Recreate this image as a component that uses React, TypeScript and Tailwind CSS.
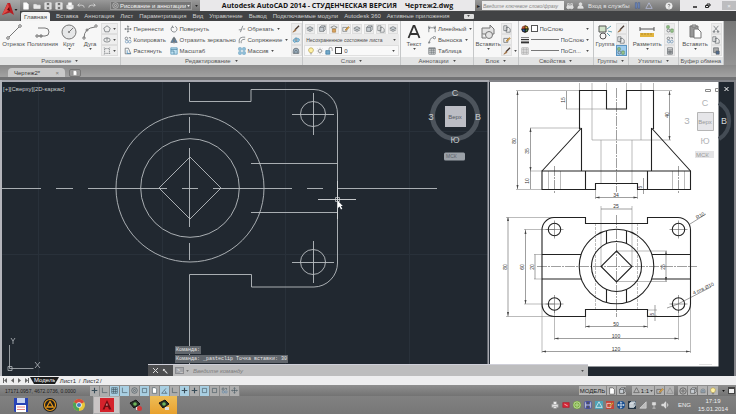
import type { ReactNode } from 'react'

const glyphs: Record<string, ReactNode> = {
    move: <path d="M5 1v8M1 5h8M3.8 2.2 5 1l1.2 1.2M3.8 7.8 5 9l1.2-1.2M2.2 3.8 1 5l1.2 1.2M7.8 3.8 9 5 7.8 6.2" />,
    rotate: <path d="M6.5 1.7A3.7 3.7 0 1 1 3 2M3 .8V3h2" />,
    trim: <path d="M1 6h3M6 5h3M3 9l3-8" />,
    copy: <><circle cx="3" cy="3" r="1.6" /><circle cx="3.4" cy="7" r="1.7" stroke="#5b87ad" /><circle cx="7.2" cy="7" r="1.7" stroke="#5b87ad" /><path d="M6 2h2v2" /></>,
    mirror: <><path d="M4.3 2v6H1zM5.7 2v6H9z" fill="#5f8db4" /><path d="M5 1v8.5" /></>,
    fillet: <path d="M1.5 9V5Q2 1.5 6 1.5h3M4 9V6.5Q4.5 4 9 4" />,
    stretch: <><path d="M1.5 1.5h4l3 7h-7z" /><path d="M4 4v4h4.5" stroke="#2e7fb8" /></>,
    scale: <><path d="M1 1h8v8H1z" fill="#bfe0f0" stroke="#4187ae" /><path d="M1 5h4v4M1 3h8" stroke="#34708f" /></>,
    array: <path d="M1 1h3v3H1zM6 1h3v3H6zM1 6h3v3H1zM6 6h3v3H6z" fill="#b6dcef" stroke="#3f86ad" />,
    brush: <><path d="m8.8 1-5 5" stroke="#493a32" strokeWidth="1.6" /><path d="M4 5.5 1 9l4-2z" fill="#a77443" stroke="#976737" /></>,
    cloud: <><path d="M2 7Q0 5 3 4q1-3 4-1 3 0 2 3-1 2-4 1-2 2-3 0z" fill="#9bd0ec" stroke="#3380aa" /><circle cx="5" cy="5" r="1.3" fill="#fff" /></>,
    offset: <path d="M1.5 8V5a3.5 3.5 0 0 1 7 0v3zM3.5 8V5.5a1.5 1.5 0 0 1 3 0V8" fill="#9db4c6" />,
    layers: <path d="m1 4 4-2 4 2-4 2zM1 6l4 2 4-2" fill="#c8ced3" />,
    layersOn: <><path d="m1 3 4-2 4 2-4 2z" fill="#e7e7e4" /><path d="M3 5h4v4H3z" fill="#d9a45d" stroke="#a87838" /></>,
    layerBox: <path d="M2 3h5v5H2zM2 3l2-2h5L7 3M9 1v5L7 8" fill="#c7cdd3" />,
    rect: <path d="M2 2h6v6H2zM1 1h1M8 8h1M1 9h1M8 1h1" strokeDasharray="1.5 .7" />,
    polygon: <path d="m5 1 4 3-1.5 4.5h-5L1 4z" />,
    ellipse: <><ellipse cx="5" cy="5" rx="4" ry="2.6" /><path d="M5 2v4" /></>,
    dim: <path d="M1 1v8M9 1v8M1 3.5h8M2.5 2 1 3.5 2.5 5M7.5 2 9 3.5 7.5 5" />,
    leader: <><path d="M1 9 3 4q1-2 3-2" /><circle cx="8" cy="2" r="1.5" /><path d="m1 7 0 2 2-1" /></>,
    table: <path d="M1 1h8v8H1zM1 2h8M1 4h8M1 6.5h8M4 2v7M6.5 2v7" />,
    bulb: <><path d="M3.5 7Q1.8 5 2 3.5q.5-2.5 3-2.5t3 2.5Q8.2 5 6.5 7z" fill="#fff2a6" stroke="#b19b45" /><path d="M3.7 8.5h2.6" /></>,
    sun: <><circle cx="5" cy="5" r="2" /><path d="M5 1v1M5 8v1M1 5h1M8 5h1M2.2 2.2l.7.7M7.1 7.1l.7.7M7.8 2.2l-.7.7M2.9 7.1l-.7.7" /></>,
    lock: <><path d="M1 4.5h5V9H1z" fill="#73a9ca" stroke="#2e6f99" /><path d="M5 4V2.5a1.8 1.8 0 0 1 4 0V5" /></>,
    edit: <><path d="M1 3h5v5H1z" /><path d="m4 6 4-4 1 1-4 4z" fill="#e0aa50" stroke="#a77121" /></>,
    group: <><path d="M1 1h3v3H1zM6 5h3v4H6z" fill="#a8d299" stroke="#558451" /><circle cx="3" cy="7" r="1.8" /></>,
    calc: <path d="M2 1h6v8H2zM2 3.5h6M4 4v5M6 4v5M2 5.5h6M2 7.2h6" />,
    cut: <path d="m2 1 5 6M8 1 3 7M1.5 7.5h2v1.5h-2zM6.5 7.5h2v1.5h-2z" />,
    pages: <path d="M1 1h4v6H1zM4 3h3l2 2v4H4z" />,
    clip: <><path d="M2 1h6v6H2z" fill="#ababab" /><path d="M5 5h4v4H5z" fill="#506b92" /></>,
    flag: <><path d="M1 2h8v6H1z" fill="#d62737" stroke="#b01b2b" /><path d="m3 4 4 2" stroke="#fff" /></>,
    wheel: <><circle cx="5" cy="5" r="4" fill="#cf543c" stroke="#7d5a37" /><path d="M5 5V1a4 4 0 0 1 4 4z" fill="#e6b83a" /><path d="M5 5h4a4 4 0 0 1-4 4z" fill="#538552" /><path d="M5 5v4a4 4 0 0 1-4-4z" fill="#3a62a0" /></>,
    weight: <><path d="M0 2h10" strokeWidth=".8" /><path d="M0 4.5h10" strokeWidth="1.5" /><path d="M0 8h10" strokeWidth="2.4" /></>,
    ltype: <path d="M1 1h8v8H1zM1 3.5h8M1 6.5h8M3.5 1v8M6.5 1v8" stroke="#999" />,
    page: <path d="M2 1h4l2 2v6H2z" fill="#fff" />,
    folder: <path d="M1 3h3l1 1h4v4H1z" fill="#e9e9e9" />,
    save: <><path d="M1 1h8v8H1z" fill="#dadada" /><path d="M3 1h4v3H3zM3 6h4v3H3z" fill="#555" /></>,
    print: <><path d="M1 4h8v4H1z" fill="#e1e1e1" /><path d="M3 1h4v3H3zM3 7h4v2H3z" fill="#fff" /></>,
    undo: <path d="M3 2 1 4l2 2M1 4h5q3 0 3 3" />,
    redo: <path d="m7 2 2 2-2 2M9 4H4Q1 4 1 7" />,
    gear: <><circle cx="5" cy="5" r="4" /><circle cx="5" cy="5" r="1.5" /></>,
    corner: <path d="M2 1v7h7" />,
    grid: <path d="M1 1h8v8H1zM1 3.6h8M1 6.3h8M3.6 1v8M6.3 1v8" />,
    polar: <path d="M1 9 7 2M1 9h8M5 5q2 1 2 4" />,
    osnap: <path d="M2 2h6v6H2z" />,
    plus: <path d="M5 1v8M1 5h8" strokeWidth="1.6" />,
    tri: <path d="m5 1 4 7H1z" />,
    search: <><circle cx="3" cy="6.5" r="2" fill="#ddd" /><circle cx="7" cy="6.5" r="2" fill="#ddd" /><path d="M2 5V2h2v3M6 5V2h2v3" /></>,
    person: <><circle cx="5" cy="3" r="2" fill="#ddd" /><path d="M1 9q0-4 4-4t4 4z" fill="#ddd" /></>,
    swap: <path d="M2 1h2v8H2zM6 1h2v8H6z" fill="#8aa6d8" />,
    plug: <path d="M3 2h4v3H3zM5 5v4M3 9h4" fill="#ddd" />,
    help: <><circle cx="5" cy="5" r="4" fill="#eee" /><path d="M3.7 4Q4 2.5 5.2 2.8t.8 1.5L5 5.5V6M5 7v1" stroke="#444" /></>,
    wrench: <path d="m2 2 6 6M1.5 4Q4 4.5 4 1.5M8 9l1-1" strokeWidth="1.8" />,
    signal: <path d="M1 9h8V1z" fill="#bbb" />,
    speaker: <path d="M1 4h2l3-3v8L3 6H1zM8 3q1.5 2 0 4" fill="#ddd" />,
}

const Glyph = ({ name, className = 'size-2.5 text-[#5d6266]' }: { name: string; className?: string }) => (
    <svg viewBox="0 0 10 10" className={`shrink-0 ${className}`} fill="none" stroke="currentColor" strokeWidth=".8" aria-hidden="true">
        {glyphs[name]}
    </svg>
)

const Caret = ({ className = 'text-[#4c4c4c]' }: { className?: string }) => (
    <svg viewBox="0 0 4 3" className={`w-[3px] h-[2px] shrink-0 ${className}`} aria-hidden="true">
        <path d="M0 0h4L2 3z" fill="currentColor" />
    </svg>
)

const Panel = ({ title, className, caret = true, children }: { title: string; className: string; caret?: boolean; children: ReactNode }) => (
    <section className={`min-w-0 flex flex-col border-r border-[#c5c7c8] bg-[#f7f7f7] ${className}`}>
        <div className="h-9 flex pt-[2px] px-px overflow-hidden">{children}</div>
        <button className="h-2 w-full flex items-center justify-center gap-1 bg-[#e2e3e3] text-[#555] whitespace-nowrap">
            {title}
            {caret && <Caret />}
        </button>
    </section>
)

const BigTool = ({ label, className, caret, children }: { label: string; className: string; caret?: boolean; children: ReactNode }) => (
    <button className={`flex flex-col items-center shrink-0 text-[#505050] ${className}`}>
        <span className="h-[17px] flex items-center justify-center">{children}</span>
        <span className="h-2 leading-[8px] whitespace-nowrap">{label}</span>
        {caret && <Caret />}
    </button>
)

const ToolColumn = ({ tools, className }: { tools: { icon: string; label: string; caret?: boolean }[]; className: string }) => (
    <div className={`flex flex-col shrink-0 ${className}`}>
        {tools.map((t) => (
            <button key={t.label} className="h-[11px] flex items-center gap-[2px] whitespace-nowrap text-[#505050]">
                <Glyph name={t.icon} className="size-2 text-[#555b60]" />
                {t.label}
                {t.caret && <Caret className="text-[#4c4c4c] ml-px" />}
            </button>
        ))}
    </div>
)

const IconColumn = ({ icons, className, active = -1 }: { icons: [string, string][]; className: string; active?: number }) => (
    <div className={`flex flex-col shrink-0 ${className}`}>
        {icons.map(([icon, label], i) => (
            <button
                key={label}
                aria-label={label}
                className={`h-[11px] w-full flex items-center justify-center border ${i === active ? 'bg-[#9ecbed] border-[#5a95c2]' : 'bg-[#ededed] border-[#e0e0e0]'}`}
            >
                <Glyph name={icon} className="size-2 text-[#555b60]" />
            </button>
        ))}
    </div>
)

const Choice = ({ label, value, className = '' }: { label: string; value: string; className?: string }) => (
    <span className="flex-1 min-w-0 flex items-center pr-[3px]">
        <select aria-label={label} className={`appearance-none flex-1 min-w-0 bg-transparent text-[#4d4d4d] ${className}`}>
            <option>{value}</option>
        </select>
        <Caret />
    </span>
)

const quickIcons: [string, string][] = [
    ['page', 'Создать'],
    ['folder', 'Открыть'],
    ['save', 'Сохранить'],
    ['save', 'Сохранить как'],
    ['print', 'Печать'],
    ['undo', 'Отменить'],
    ['redo', 'Повторить'],
]

const TitleBar = () => (
    <header className="h-[11px] flex items-center pl-[22px] bg-linear-to-b from-[#999] to-[#747474]">
        <div className="w-[88px] shrink-0 flex items-center gap-[3px]">
            {quickIcons.map(([icon, label]) => (
                <button key={label} aria-label={label}>
                    <Glyph name={icon} className="size-2 text-[#eee]" />
                </button>
            ))}
        </div>
        <div className="w-[82px] h-[9px] shrink-0 flex items-center gap-px pl-px bg-[#777] border border-[#999] text-[#eee]">
            <Glyph name="gear" className="size-[7px] text-[#ddd]" />
            <select aria-label="Рабочее пространство" className="appearance-none flex-1 min-w-0 text-[#f2f2f2]">
                <option>Рисование и аннотации</option>
            </select>
            <Caret className="text-[#eee] mr-px" />
        </div>
        <button aria-label="Настройка панели" className="w-2 flex justify-center shrink-0"><Caret className="text-[#222]" /></button>
        <h1 className="h-[11px] flex-1 flex items-center justify-center bg-[#e9e8ea] text-[#161616] font-bold text-[7px] leading-[11px] whitespace-nowrap font-['Open_Sans','Noto_Sans',sans-serif]">
            Autodesk AutoCAD 2014 - СТУДЕНЧЕСКАЯ ВЕРСИЯ <span className="ml-2">Чертеж2.dwg</span>
        </h1>
        <button aria-label="Свернуть поиск" className="w-[7px] shrink-0 text-[#222]">▸</button>
        <input
            aria-label="Поиск"
            placeholder="Введите ключевое слово/фразу"
            className="w-[82px] h-[9px] shrink-0 bg-[#ececec] italic pl-px text-[5px] placeholder:text-[#888]"
        />
        <div className="w-[116px] shrink-0 flex items-center pl-[2px] text-[#e3e3e3] whitespace-nowrap">
            <button aria-label="Найти"><Glyph name="search" className="size-2 text-[#eee]" /></button>
            <button className="flex items-center gap-1 ml-[3px]">
                <Glyph name="person" className="size-[7px] text-[#eee]" />
                Вход в службы
            </button>
            <button aria-label="Exchange" className="ml-1"><Glyph name="swap" className="size-[7px] text-[#35508c]" /></button>
            <button aria-label="Autodesk 360" className="ml-1"><Glyph name="tri" className="size-2 text-[#c2c9ef]" /></button>
            <button aria-label="Справка" className="ml-3"><Glyph name="help" className="size-2 text-[#eee]" /></button>
        </div>
        <div className="w-[56px] h-[11px] shrink-0 flex items-center justify-end bg-[#e9e8ea] text-[#222]">
            <button aria-label="Свернуть" className="mr-[7px]"><svg viewBox="0 0 5 5" className="size-[5px]"><path d="M0 4h4" stroke="#222" strokeWidth="1.5" /></svg></button>
            <button aria-label="Восстановить" className="mr-[11px]"><svg viewBox="0 0 6 6" className="size-[6px]"><path d="M.5 2.5h3v2h-3zM2 2V1h3v2H4" stroke="#222" fill="none" /></svg></button>
            <button aria-label="Закрыть" className="w-[14px] h-[9px] bg-[#bdbdbf] text-[#f3f3f3]">×</button>
        </div>
    </header>
)

const tabs = ['Вставка', 'Аннотация', 'Лист', 'Параметризация', 'Вид', 'Управление', 'Вывод', 'Подключаемые модули', 'Autodesk 360', 'Активные приложения']

const RibbonTabs = () => (
    <nav className="h-[10px] flex items-center gap-[6px] pl-[21px] bg-[#414244] text-[#d0d0d0] whitespace-nowrap overflow-hidden">
        <button className="h-[9px] w-[29px] self-end bg-[#f4f4f4] text-[#444] rounded-t-xs">Главная</button>
        {tabs.map((t) => <button key={t}>{t}</button>)}
        <button aria-label="Вид ленты" className="ml-2 w-2.5 h-[5px] bg-[#ddd] rounded-[1px] flex items-center justify-center"><Caret /></button>
    </nav>
)

const Ribbon = () => (
    <div className="flex bg-linear-to-b from-[#777] to-[#949494] pr-3">
        <Panel title="Рисование" className="flex-[121]">
            <BigTool label="Отрезок" className="w-[25px]">
                <svg viewBox="0 0 16 16" className="size-4" fill="none" stroke="#777"><path d="M3 13 13 3" /><circle cx="2" cy="14" r="1.3" /><circle cx="14" cy="2" r="1.3" /></svg>
            </BigTool>
            <BigTool label="Полилиния" className="w-[33px]">
                <svg viewBox="0 0 16 16" className="size-4" fill="none" stroke="#777"><path d="M3 4h7a4 4 0 0 1 0 8H3" /><path d="M1 11h2v2H1zM5 11h2v2H5z" /></svg>
            </BigTool>
            <BigTool label="Круг" caret className="w-5">
                <svg viewBox="0 0 16 16" className="size-4" fill="#e6e7e8" stroke="#777"><circle cx="8" cy="8" r="7" /><path d="m8 8 4-4" /><circle cx="8" cy="8" r=".7" /></svg>
            </BigTool>
            <BigTool label="Дуга" caret className="w-[22px]">
                <svg viewBox="0 0 16 16" className="size-4" fill="none" stroke="#777"><path d="M2 14Q2 4 13 3" /><circle cx="2" cy="14" r="1.2" /><circle cx="14" cy="2" r="1.2" /><circle cx="5" cy="6" r="1" /></svg>
            </BigTool>
            <div className="flex flex-col">
                {[['polygon', 'Многоугольник'], ['ellipse', 'Эллипс'], ['rect', 'Штриховка']].map(([icon, label]) => (
                    <button key={icon} aria-label={label} className="h-[11px] w-[17px] flex items-center justify-between px-px bg-[#eee] border border-[#dedede]">
                        <Glyph name={icon} className="size-2 text-[#555b60]" />
                        <Caret />
                    </button>
                ))}
            </div>
        </Panel>
        <Panel title="Редактирование" className="flex-[184]">
            <ToolColumn className="w-[46px] pl-[2px]" tools={[{ icon: 'move', label: 'Перенести' }, { icon: 'copy', label: 'Копировать' }, { icon: 'stretch', label: 'Растянуть' }]} />
            <ToolColumn className="w-[68px] pl-[2px]" tools={[{ icon: 'rotate', label: 'Повернуть' }, { icon: 'mirror', label: 'Отразить зеркально' }, { icon: 'scale', label: 'Масштаб' }]} />
            <ToolColumn className="w-[55px] pl-[2px]" tools={[{ icon: 'trim', label: 'Обрезать', caret: true }, { icon: 'fillet', label: 'Сопряжение', caret: true }, { icon: 'array', label: 'Массив', caret: true }]} />
            <IconColumn className="w-[11px]" icons={[['brush', 'Стереть'], ['cloud', 'Расчленить'], ['offset', 'Подобие']]} />
        </Panel>
        <Panel title="Слои" className="flex-[98]">
            <div className="flex-1 min-w-0 flex flex-col">
                <div className="h-[11px] flex items-center justify-between px-px">
                    {['layers', 'layerBox', 'layersOn', 'edit', 'layers', 'layerBox', 'pages', 'layers'].map((icon, i) => (
                        <button key={i} aria-label={`Слой ${i + 1}`} className="size-[10px] bg-[#ececec] border border-[#dedede] flex items-center justify-center">
                            <Glyph name={icon} className="size-2 text-[#666c70]" />
                        </button>
                    ))}
                </div>
                <div className="h-[11px] flex items-center pl-[2px] bg-[#ebebeb]"><Choice label="Состояние слоев" value="Несохраненное состояние листа" className="text-[5px]" /></div>
                <div className="h-[11px] flex items-center gap-px pl-[2px] bg-[#f9f9f9] border border-[#e0e0e0]">
                    <Glyph name="bulb" className="size-2 text-[#777]" />
                    <Glyph name="sun" className="size-2 text-[#777]" />
                    <Glyph name="lock" className="size-2 text-[#777]" />
                    <span className="size-[7px] border border-[#444] bg-white mx-px" />
                    <Choice label="Слой" value="0" />
                </div>
            </div>
        </Panel>
        <Panel title="Аннотации" className="flex-[73]">
            <BigTool label="Текст" caret className="w-6">
                <svg viewBox="0 0 14 14" className="size-3.5" stroke="#333" fill="none"><path d="M1.5 13 6.5 1h1l5 12M3.5 9h7" strokeWidth="1.8" /></svg>
            </BigTool>
            <ToolColumn className="pl-[2px]" tools={[{ icon: 'dim', label: 'Линейный', caret: true }, { icon: 'leader', label: 'Выноска', caret: true }, { icon: 'table', label: 'Таблица' }]} />
        </Panel>
        <Panel title="Блок" className="flex-[44]">
            <BigTool label="Вставить" caret className="w-[26px]">
                <svg viewBox="0 0 16 16" className="size-4" fill="#e3e3e3" stroke="#777"><path d="M2 4h8V1l4 4v5H2z" /><circle cx="9" cy="11" r="3.5" /><path d="M2 10v4h4" /></svg>
            </BigTool>
            <IconColumn className="w-[11px]" icons={[['pages', 'Создать блок'], ['edit', 'Редактировать'], ['brush', 'Атрибуты']]} />
            <span className="self-end pb-[5px] pl-[2px]"><Caret /></span>
        </Panel>
        <Panel title="Свойства" className="flex-[75]">
            <div className="flex-1 min-w-0 flex flex-col">
                <div className="h-[11px] flex items-center gap-[2px] pl-px">
                    <Glyph name="wheel" className="size-2" />
                    <span className="size-[7px] bg-white border border-[#555] shrink-0" />
                    <Choice label="Цвет" value="ПоСлою" />
                </div>
                <div className="h-[11px] flex items-center gap-[2px] pl-px">
                    <Glyph name="weight" className="size-2 text-[#333]" />
                    <span className="w-[28px] h-px bg-[#777] shrink-0" />
                    <Choice label="Вес линий" value="ПоСлою" />
                </div>
                <div className="h-[11px] flex items-center gap-[2px] pl-px">
                    <Glyph name="ltype" className="size-2" />
                    <span className="w-[28px] h-px bg-[#777] shrink-0" />
                    <Choice label="Тип линий" value="ПоСл..." />
                </div>
            </div>
        </Panel>
        <Panel title="Группы" className="flex-[35]">
            <BigTool label="Группа" className="w-[21px]">
                <svg viewBox="0 0 16 16" className="size-4" fill="none" stroke="#555"><path d="M2 2h7v6H2z" fill="#d2e4ca" /><circle cx="6" cy="12" r="3" /><path d="m10 5 4-3M11 7l4 1M10 9l3 3" stroke="#5e9faf" /></svg>
            </BigTool>
            <IconColumn active={2} className="w-[11px]" icons={[['brush', 'Разгруппировать'], ['pages', 'Редактировать группу'], ['group', 'Выбор группы']]} />
        </Panel>
        <Panel title="Утилиты" className="flex-[49]">
            <BigTool label="Разметить" caret className="w-[34px]">
                <svg viewBox="0 0 16 16" className="size-4"><path d="M1 5h14M1 3v4M15 3v4" stroke="#555" /><path d="M1 9h14v4H1z" fill="#e2b53f" /><path d="M3 9v2M6 9v2M9 9v2M12 9v2" stroke="#936e22" strokeWidth=".6" /></svg>
            </BigTool>
            <IconColumn className="w-[11px]" icons={[['group', 'Выбрать все'], ['copy', 'Быстрый выбор'], ['calc', 'Калькулятор']]} />
        </Panel>
        <Panel title="Буфер обмена" caret={false} className="flex-[45]">
            <BigTool label="Вставить" caret className="w-[31px]">
                <svg viewBox="0 0 16 16" className="size-4" stroke="#777"><path d="M3 2h8v11H3z" fill="#999" /><path d="M5 1h4v2H5z" fill="#ccc" /><path d="M7 5h4l3 3v6H7z" fill="#fff" /></svg>
            </BigTool>
            <IconColumn className="w-[11px]" icons={[['cut', 'Вырезать'], ['pages', 'Копировать в буфер'], ['clip', 'Специальная вставка']]} />
        </Panel>
    </div>
)

const DocTabs = () => (
    <div className="h-[15px] flex items-end bg-linear-to-b from-[#8a8a8a] to-[#a2a2a2] border-b-[3px] border-[#717274] pl-2">
        <button className="h-[9px] w-[57px] flex items-center justify-between px-[6px] bg-[#c9c9c9] rounded-t-sm text-[#333] whitespace-nowrap">
            Чертеж2* <span className="text-[#777]">×</span>
        </button>
        <button aria-label="Новый чертеж" className="w-3 h-2 ml-1 bg-[#999] border border-[#777] rounded-xs flex items-center justify-center">
            <Glyph name="page" className="size-[6px] text-[#777]" />
        </button>
    </div>
)

const ModelView = () => (
    <svg viewBox="0 80 489 296" className="block w-full h-auto bg-[#212830]" fill="none" role="img" aria-label="Вид модели">
        <path d="M38.5 82v294M162.5 82v294M285.5 82v294M409.5 82v294M0 131.5h489M0 254.5h489" stroke="#29313a" />
        <path d="M0 81h488.5v295" stroke="#a8a9b0" strokeWidth="2" />
        <path d="M1 80v296" stroke="#b4b5bb" strokeWidth="2" />
        <g stroke="#b9bdc1" strokeWidth=".9">
            <circle cx="190" cy="188" r="74" />
            <circle cx="190" cy="188" r="49.3" />
            <path d="m190 157 31 31-31 31-31-31z" />
            <path d="M189.5 83v18.5h61.5v-12h63A24 24 0 0 1 337.5 114v149A24 24 0 0 1 314 287h-62.5v-12.5h-62V376" />
            <path d="M251 163.5h86.5M251 212.5h86.5" />
            <circle cx="313" cy="114" r="12.5" />
            <circle cx="313" cy="262" r="12.5" />
            <path d="M292 114.5h42M313.5 93v42M292 262.5h42M313.5 241v42" />
            <path d="M2 188.5h39M56 188.5h17M88 188.5h79M182 188.5h16M213 188.5h79M307 188.5h16M337 188.5h100" />
            <path d="M189.5 117v16M189.5 148v79M189.5 243v17" />
        </g>
        <path d="M318 199.5h38M337.5 181v38" stroke="#d6d8da" strokeWidth=".9" />
        <path d="M335.5 197.5h4v4h-4z" stroke="#d6d8da" strokeWidth=".7" />
        <path d="m338 201 0 7 1.5-1.5 1.5 3 1.3-.7-1.5-2.8h2z" fill="#fff" />
        <path d="M9.5 345v23.5h24M8 366.5h4v4H8zM11 338l2 3 2-3M13 341v3M35 362l5 6M40 362l-5 6" stroke="#b4b8bc" strokeWidth=".8" />
        <text x="3" y="91" className="text-[6px] fill-[#c5c8ca]">[+][Сверху][2D-каркас]</text>
        <circle cx="455" cy="116" r="22.5" stroke="#4d545c" strokeWidth="5" />
        <path d="M445 106h21v21h-21z" fill="#bcbdc4" />
        <g className="text-[9px] fill-[#c5c8cb]" textAnchor="middle">
            <text x="455" y="96">С</text>
            <text x="431" y="120">З</text>
            <text x="478" y="120">В</text>
            <text x="455" y="143">Ю</text>
            <text x="455" y="119" className="text-[6px] fill-[#55575e]">Верх</text>
        </g>
        <rect x="444" y="152.5" width="21" height="8" rx="1.5" fill="#9ba1a8" />
        <text x="446" y="158" className="text-[5px] fill-[#5d646c]">МСК</text>
    </svg>
)

const holes = [[554.5, 229.5], [678.5, 229.5], [554.5, 304], [678.5, 304]]

// [x, y, text, rotation]
const dimensions: [number, number, string, number][] = [
    [516, 141, '80', -90],
    [529, 151, '35', -90],
    [529, 181, '10', -90],
    [565, 100, '15', -90],
    [669, 115, '40', -90],
    [642, 187, '5', -90],
    [616, 197, '34', 0],
    [616, 208, '25', 0],
    [507, 267, '80', -90],
    [524, 267, '60', -90],
    [534, 267, '20', -90],
    [665, 267, '25', -90],
    [654, 314, '5', -90],
    [616, 326, '50', 0],
    [616, 338, '100', 0],
    [616, 351, '120', 0],
    [701, 217, 'R10', -28],
    [704, 290, '4 отв.Ø10', -25],
]

const SheetView = () => (
    <svg viewBox="489 80 247 296" className="block w-full h-auto bg-[#212830]" fill="none" role="img" aria-label="Вид листа">
        <path d="M490 82h228.5v284.5H490z" fill="#fff" />
        <path d="M489 81h247M735 80v296" stroke="#838489" strokeWidth="2" />
        <path d="M489.5 82v294" stroke="#28303a" />
        <g stroke="#8d8d8d" strokeWidth=".6">
            <path d="M579.5 83v8M606.5 83v8M626.5 83v8M653.5 83v8M592 83v57M641 83v57M592 140h79M601 140v43M632 140v43" />
            <path d="M516 90.5h63M516 189.5h26M530 128h51M530 171h12M566 109h40M654 90.5h18" />
            <path d="M548.5 171v18M560.5 171v18M672.5 171v18M684.5 171v18M595.5 190v9M637.5 190v9" />
            <path d="M595.5 223v86M637.5 223v86" strokeDasharray="3 1" />
            <path d="M601 206v60M632 206v60M616 251h51M616 281.5h51M506 217.5h48M506 316.5h48M524 229.5h30M524 304h30M534 254.5h8M534 279h8" />
            <path d="M542 304v49M690.5 304v49M554.5 310v30M678.5 310v30M585.5 316v12M647.5 316v12M648 310h9M648 316h9" />
        </g>
        <g stroke="#5e5e5e" strokeWidth=".6">
            <path d="M517.5 91v98M530.5 128v61M566.5 91v18M669.5 91v49M595.5 197.5h42M643.5 178v16M601 209h31" />
            <path d="M508 217.5v99M525.5 229.5V304M535 254.5V279M666 251v30.5M655 305v16" />
            <path d="M585.5 326.5h62M554.5 338.5h124M542 351.5h148.5" />
            <path d="m690 224 16-10M678 304l33-17M667 308l11-4" />
            <path d="M554.5 166v28M678.5 166v28M616.5 88v104M616.5 215v102M537 266.5h160" strokeDasharray="10 1 2 1" />
            {holes.map(([x, y]) => <path key={`${x}-${y}`} d={`M${x - 9} ${y}h18M${x} ${y - 9}v18`} />)}
        </g>
        <g fill="#444">
            <path d="m517.5 91-1 4h2zM517.5 189l-1-4h2zM530.5 128l-1 4h2zM530.5 171l-1-4h2zM669.5 91l-1 4h2zM669.5 140l-1-4h2zM508 217l-1 4h2zM508 316l-1-4h2zM525.5 230l-1 4h2zM525.5 304l-1-4h2zM666 251l-1 4h2zM666 281l-1-4h2z" />
            <path d="m542 351.5 4-1v2zM690 351.5l-4-1v2zM554.5 338.5l4-1v2zM678.5 338.5l-4-1v2zM585.5 326.5l4-1v2zM647.5 326.5l-4-1v2zM595.5 197.5l4-1v2zM637.5 197.5l-4-1v2z" />
        </g>
        <g stroke="#222" strokeWidth="1.1">
            <path d="M579.5 129V90.5h27V109h20V90.5h27V129M581.5 128v43M651.5 128v43M579.5 129h2M653.5 129h-2M581.5 128 542 171M651.5 128l39 43" />
            <path d="M542 171h148.5v18.5h-53v-6h-42v6H542zM585.5 171v18.5M647.5 171v18.5" />
            <path d="M554 217.5h31.5v6h62v-6H678a12.5 12.5 0 0 1 12.5 12.5v74a12.5 12.5 0 0 1-12.5 12.5h-30.5v-7h-62v7H554a12.5 12.5 0 0 1-12-12.5v-74a12.5 12.5 0 0 1 12-12.5z" />
            <circle cx="616.5" cy="266.5" r="37.3" />
            <circle cx="616.5" cy="266.5" r="25" />
            <path d="m616.5 251 15.5 15.5-15.5 15.5-15.5-15.5zM606.5 231v13M626.5 231v13M606.5 289v13M626.5 289v13" />
            <path d="M542 254.5h39M542 279h39M652 254.5h38.5M652 279h38.5" />
            {holes.map(([x, y]) => <circle key={`${x}-${y}`} cx={x} cy={y} r="6.2" />)}
        </g>
        <g className="text-[5px] fill-[#333]" textAnchor="middle">
            {dimensions.map(([x, y, text, angle]) => (
                <text key={`${x}-${y}`} x={x} y={y} transform={`rotate(${angle} ${x} ${y})`}>{text}</text>
            ))}
        </g>
        <path d="M719 103a21 21 0 0 1 0 36" stroke="#444c55" strokeWidth="4" />
        <path d="M697.5 112.5h16v18h-16z" fill="#e6e6e9" stroke="#b5b5b5" />
        <g className="text-[9px] fill-[#b0b2b5]" textAnchor="middle">
            <text x="705" y="106">С</text>
            <text x="687" y="124">З</text>
            <text x="724" y="124" className="fill-[#d5d7d9]">В</text>
            <text x="705" y="144">Ю</text>
            <text x="705" y="124" className="text-[6px] fill-[#999]">Верх</text>
        </g>
        <path d="M695 151h19v7h-19z" fill="#e4e4e6" />
        <text x="696" y="157" className="text-[6px] fill-[#999]">МСК</text>
        <path d="M705.5 89.5h5v2h-5zM715.5 88.5h3v3h-3z" stroke="#8a8a8a" />
        <path d="m724.5 87 4 4M728.5 87l-4 4" stroke="#fff" />
        <path d="M699 364.5h13" stroke="#ccc" strokeWidth=".6" />
    </svg>
)

const CommandLine = () => (
    <>
        <div className="absolute left-[175px] bottom-[13px] flex flex-col items-start gap-px font-['Liberation_Mono',monospace] text-[5px] leading-[8px] text-[#e5e5e5] whitespace-pre">
            <p className="bg-[#61666c] px-px">Команда:</p>
            <p className="bg-[#61666c] px-px">Команда: _pasteclip Точка вставки: 30</p>
        </div>
        <form className="absolute left-[148px] right-[148px] bottom-0 h-3 flex items-center bg-[#bdbdbe] border-t border-[#cfcfd8]">
            <div className="h-full w-[25px] flex items-center justify-center gap-1 bg-[#4d4e50]">
                <button type="button" aria-label="Закрыть строку"><svg viewBox="0 0 5 5" className="size-[5px]"><path d="m0 0 5 5M5 0 0 5" stroke="#ddd" /></svg></button>
                <button type="button" aria-label="Настройка"><Glyph name="wrench" className="size-[6px] text-[#ddd]" /></button>
            </div>
            <span className="w-[9px] h-[7px] mx-[2px] bg-[#a5a6aa] border border-[#8a8b8f] text-[#eee] text-[5px] leading-[5px] pl-px">&gt;_</span>
            <Caret className="text-[#777]" />
            <input aria-label="Команда" placeholder="Введите команду" className="flex-1 min-w-0 ml-1 italic placeholder:text-[#7f7f80]" />
            <button type="button" aria-label="История команд" className="mr-1"><Caret /></button>
        </form>
    </>
)

const SheetTabs = () => (
    <div className="h-[9px] flex items-center pl-[3px] bg-[#eeeeef] text-[#333] whitespace-nowrap">
        <div className="flex gap-[2px] w-[27px] text-[#555]">
            {['В начало', 'Назад', 'Вперед', 'В конец'].map((label, i) => (
                <button key={label} aria-label={label}>
                    <svg viewBox="0 0 5 5" className="size-[5px]"><path d={['M4 0v5L1 2.5zM0 0h1v5H0z', 'M4 0v5L1 2.5z', 'M1 0v5l3-2.5z', 'M1 0v5l3-2.5zM4 0h1v5H4z'][i]} fill="#666" /></svg>
                </button>
            ))}
        </div>
        <svg viewBox="0 0 4 7" className="w-1 h-[7px]"><path d="M0 0h4v7z" fill="#1d1d1d" /></svg>
        <button className="h-[7px] leading-[7px] bg-[#1d1d1d] text-white w-[21px]">Модель</button>
        <svg viewBox="0 0 4 7" className="w-1 h-[7px]"><path d="M0 0h4L0 7z" fill="#1d1d1d" /></svg>
        <button className="w-[18px]">Лист1</button>
        <span className="w-[5px] text-center">/</span>
        <button className="w-[18px]">Лист2</button>
        <span>/</span>
    </div>
)

const modes: [string, string, boolean][] = [
    ['plus', 'Зависимости', false],
    ['corner', 'Шаг', false],
    ['grid', 'Сетка', true],
    ['corner', 'Орто', true],
    ['gear', 'Отслеживание', false],
    ['osnap', 'Привязка', true],
    ['page', '3D привязка', false],
    ['polar', 'Объектное отслеживание', true],
    ['corner', 'ДПСК', false],
    ['plus', 'Динамический ввод', true],
    ['plus', 'Вес', false],
    ['osnap', 'Прозрачность', true],
    ['osnap', 'Быстрые свойства', false],
    ['copy', 'Циклический выбор', false],
    ['move', 'Монитор', false],
]

const statusButton = 'bg-[#b3b3b3] h-[9px] flex items-center justify-center'

const StatusBar = () => (
    <div className="h-[11px] flex items-center pl-[5px] pr-px bg-linear-to-b from-[#8f8f8f] to-[#737373] text-[#222] whitespace-nowrap">
        <output className="w-[85px] text-[5px]">17171.0957, 4672.0736, 0.0000</output>
        <div className="flex">
            {modes.map(([icon, label, on]) => (
                <button key={label} aria-label={label} className={`w-[10px] h-[10px] flex items-center justify-center border-r border-[#888] ${on ? 'bg-[#a9cfe2]' : 'bg-[#adadad]'}`}>
                    <Glyph name={icon} className="size-[7px] text-[#374b57]" />
                </button>
            ))}
        </div>
        <div className="ml-auto flex items-center gap-px">
            <button className={`${statusButton} w-[27px]`}>МОДЕЛЬ</button>
            <button aria-label="Лист" className={`${statusButton} w-[9px]`}><Glyph name="page" className="size-2 text-[#444]" /></button>
            <button aria-label="Просмотр" className={`${statusButton} w-[9px] mr-[5px]`}><Glyph name="layerBox" className="size-2 text-[#444]" /></button>
            <button className={`${statusButton} w-[22px] gap-px`}><Glyph name="tri" className="size-[7px] text-[#444]" />1:1<Caret /></button>
            <button aria-label="Масштаб аннотаций" className={`${statusButton} w-[9px]`}><Glyph name="edit" className="size-2 text-[#555]" /></button>
            <button aria-label="Автомасштаб" className={`${statusButton} w-[9px] mr-[3px]`}><Glyph name="tri" className="size-2 text-[#888]" /></button>
            <button aria-label="Рабочее место" className={`${statusButton} w-[9px]`}><Glyph name="gear" className="size-2 text-[#444]" /></button>
            <button aria-label="Блокировка" className={`${statusButton} w-[9px]`}><Glyph name="layerBox" className="size-2 text-[#555]" /></button>
            <button aria-label="Ускорение" className={`${statusButton} w-[9px]`}><Glyph name="offset" className="size-[6px] text-[#666]" /></button>
            <button aria-label="Изолировать" className={`${statusButton} w-[10px]`}><Glyph name="bulb" className="size-2 text-[#555]" /></button>
            <button aria-label="Меню строки" className="w-[8px] flex justify-center"><Caret className="text-[#111]" /></button>
            <button aria-label="Очистить экран" className="w-[7px] h-[7px] bg-[#eee] border border-t-2 border-[#444]" />
        </div>
    </div>
)

const Camera = () => (
    <svg viewBox="0 0 14 14" className="size-3.5"><path d="m2 5 6-3 4 4-6 4z" fill="#253127" stroke="#131313" /><circle cx="7" cy="6" r="1.8" fill="#6fb65a" /><path d="M8 9h4v3H8z" fill="#ddd" /></svg>
)

const trayIcons: [string, string][] = [
    ['print', 'text-[#999]'],
    ['flag', ''],
    ['gear', 'text-[#e4f3cf] bg-[#77ad3c] rounded-full'],
    ['save', 'text-[#2c3bb2]'],
    ['tri', 'text-[#fff] bg-[#4fa3b7]'],
    ['edit', 'text-[#fff] bg-[#c44438]'],
    ['move', 'text-[#fff] bg-[#184f91] rounded-full'],
    ['layerBox', 'text-[#dce7ef] bg-[#233444]'],
    ['signal', 'text-[#ddd]'],
    ['plug', 'text-[#ddd]'],
    ['speaker', 'text-[#eee]'],
]

const Taskbar = () => (
    <footer className="h-[18px] flex items-center bg-linear-to-b from-[#818181] to-[#777] pl-[7px] pr-2 text-[#eee]">
        <button aria-label="Total Commander" className="w-7 flex justify-center">
            <svg viewBox="0 0 14 14" className="size-3.5"><path d="M0 0h14v14H1l-1-1z" fill="#2843b6" /><path d="M3 0h8v5H3z" fill="#c6d2ee" /><path d="M2 7h10v7H2z" fill="#fff" /><path d="M3 9h8M3 11.5h8" stroke="#d66" strokeWidth=".8" /></svg>
        </button>
        <button aria-label="AIMP" className="w-[29px] flex justify-center">
            <svg viewBox="0 0 14 14" className="size-3.5"><circle cx="7" cy="7" r="7" fill="#201f1d" /><circle cx="7" cy="7" r="5.5" fill="none" stroke="#e79819" strokeWidth="1.2" /><path d="m7 3.5 3.2 5.5H3.8z" fill="none" stroke="#e79819" strokeWidth="1.3" /></svg>
        </button>
        <button aria-label="Chrome" className="w-[29px] flex justify-center">
            <svg viewBox="0 0 14 14" className="size-3"><circle cx="7" cy="7" r="7" fill="#e9c83a" /><path d="M7 7 .9 3.5a7 7 0 0 1 12.2 0z" fill="#d84b3c" /><path d="M7 7 .9 3.5A7 7 0 0 0 7 14z" fill="#4da455" /><circle cx="7" cy="7" r="3.2" fill="#f4f4f4" /><circle cx="7" cy="7" r="2.4" fill="#427ec0" /></svg>
        </button>
        <button aria-label="AutoCAD" className="w-[27px] h-full flex items-center justify-center bg-[#c9c4c4] border border-[#aaa]">
            <svg viewBox="0 0 14 14" className="size-3.5"><path d="M0 0h14v14H0z" fill="#d4222b" /><path d="m7 2 4.5 9.5H9L8 9H5.5l-1 2.5h-2z" fill="#6e0d12" /><path d="M5.8 7.5h2L7 5z" fill="#e9a3a3" /></svg>
        </button>
        <button aria-label="Запись" className="w-[30px] flex justify-center relative">
            <Camera />
            <span className="absolute right-[8px] bottom-px size-[5px] rounded-full bg-[#d13a3a]" />
        </button>
        <button aria-label="Camtasia" className="w-[27px] h-full flex items-center justify-center bg-linear-to-b from-[#eebd55] to-[#e8a12d]">
            <Camera />
        </button>
        <div className="ml-auto flex items-center gap-[3px] whitespace-nowrap">
            {trayIcons.map(([icon, style]) => <Glyph key={icon} name={icon} className={`size-2 ${style}`} />)}
            <button className="ml-[6px]">ENG</button>
            <time className="text-center leading-[8px] ml-[4px] w-[30px]">17:19<br />15.01.2014</time>
        </div>
    </footer>
)

const App = () => (
    <div className="min-h-screen flex flex-col relative overflow-hidden bg-[#777] font-['Liberation_Sans','Noto_Sans',sans-serif] text-[6px] leading-[8px]">
        <TitleBar />
        <RibbonTabs />
        <button aria-label="Меню приложения" className="absolute left-0 top-0 w-5 h-[21px] bg-linear-to-b from-[#a9a9a9] to-[#757575] flex items-center">
            <svg viewBox="0 0 20 20" className="size-5">
                <path d="M7.5 2h2.5l4 12-4-2.5L2 14z" fill="#b71d22" />
                <path d="m8 2 1.5 7L2 14z" fill="#df4b47" />
                <path d="m7 9 2-3 1 4z" fill="#5e0b0e" />
                <path d="M14.5 8h3L16 10z" fill="#222" />
            </svg>
        </button>
        <Ribbon />
        <DocTabs />
        <main className="relative flex bg-[#212830]">
            <div className="flex-[489] min-w-0"><ModelView /></div>
            <div className="flex-[247] min-w-0"><SheetView /></div>
            <CommandLine />
        </main>
        <SheetTabs />
        <StatusBar />
        <Taskbar />
    </div>
)

export default App
